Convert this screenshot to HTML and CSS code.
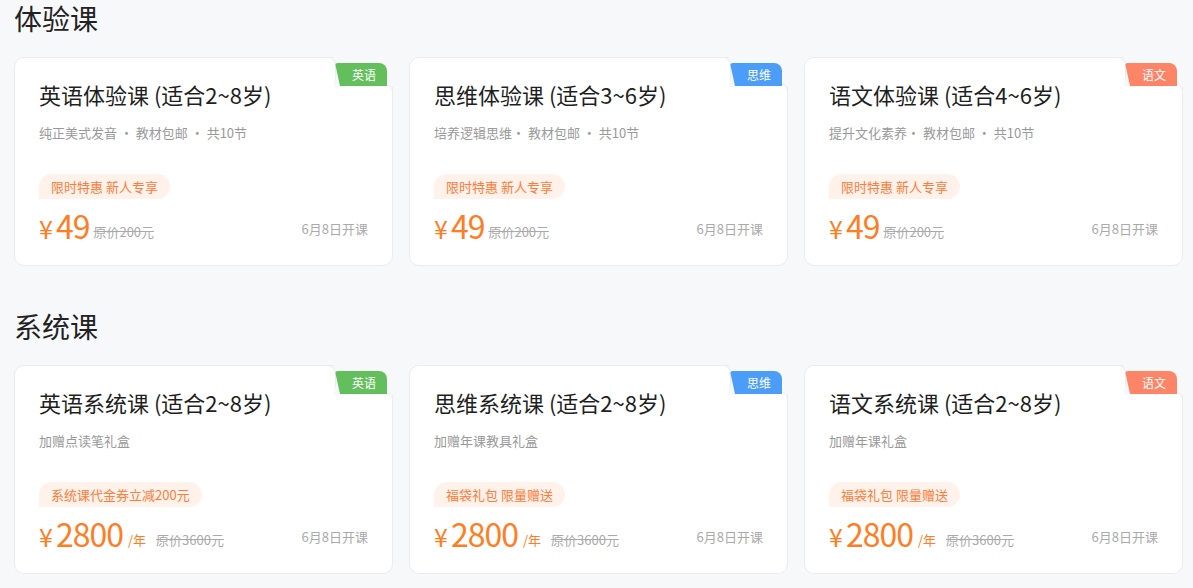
FILE: index.html
```html
<!DOCTYPE html>
<html lang="zh">
<head>
<meta charset="utf-8">
<link rel="stylesheet" href="styles.css">
</head>
<body>
<main class="page">
  <section class="section">
    <h2 class="section-title">体验课</h2>
    <div class="grid">
      <div class="card">
        <div class="notch"><span class="cap-left"></span><span class="cap-bottom"></span><span class="tag tag-green">英语</span></div>
        <h3 class="card-title">英语体验课 (适合2~8岁)</h3>
        <p class="card-sub">纯正美式发音 · 教材包邮 · 共10节</p>
        <div class="promo"><span class="pill">限时特惠 新人专享</span></div>
        <div class="price-row">
          <div class="price"><span class="yen">¥</span><span class="amount">49</span><span class="orig">原价200元</span></div>
          <span class="date">6月8日开课</span>
        </div>
      </div>
      <div class="card">
        <div class="notch"><span class="cap-left"></span><span class="cap-bottom"></span><span class="tag tag-blue">思维</span></div>
        <h3 class="card-title">思维体验课 (适合3~6岁)</h3>
        <p class="card-sub">培养逻辑思维· 教材包邮 · 共10节</p>
        <div class="promo"><span class="pill">限时特惠 新人专享</span></div>
        <div class="price-row">
          <div class="price"><span class="yen">¥</span><span class="amount">49</span><span class="orig">原价200元</span></div>
          <span class="date">6月8日开课</span>
        </div>
      </div>
      <div class="card">
        <div class="notch"><span class="cap-left"></span><span class="cap-bottom"></span><span class="tag tag-orange">语文</span></div>
        <h3 class="card-title">语文体验课 (适合4~6岁)</h3>
        <p class="card-sub">提升文化素养· 教材包邮 · 共10节</p>
        <div class="promo"><span class="pill">限时特惠 新人专享</span></div>
        <div class="price-row">
          <div class="price"><span class="yen">¥</span><span class="amount">49</span><span class="orig">原价200元</span></div>
          <span class="date">6月8日开课</span>
        </div>
      </div>
    </div>
  </section>
  <section class="section">
    <h2 class="section-title">系统课</h2>
    <div class="grid">
      <div class="card">
        <div class="notch"><span class="cap-left"></span><span class="cap-bottom"></span><span class="tag tag-green">英语</span></div>
        <h3 class="card-title">英语系统课 (适合2~8岁)</h3>
        <p class="card-sub">加赠点读笔礼盒</p>
        <div class="promo"><span class="pill">系统课代金券立减200元</span></div>
        <div class="price-row">
          <div class="price"><span class="yen">¥</span><span class="amount">2800</span><span class="unit">/年</span><span class="orig orig-gap">原价3600元</span></div>
          <span class="date">6月8日开课</span>
        </div>
      </div>
      <div class="card">
        <div class="notch"><span class="cap-left"></span><span class="cap-bottom"></span><span class="tag tag-blue">思维</span></div>
        <h3 class="card-title">思维系统课 (适合2~8岁)</h3>
        <p class="card-sub">加赠年课教具礼盒</p>
        <div class="promo"><span class="pill">福袋礼包 限量赠送</span></div>
        <div class="price-row">
          <div class="price"><span class="yen">¥</span><span class="amount">2800</span><span class="unit">/年</span><span class="orig orig-gap">原价3600元</span></div>
          <span class="date">6月8日开课</span>
        </div>
      </div>
      <div class="card">
        <div class="notch"><span class="cap-left"></span><span class="cap-bottom"></span><span class="tag tag-orange">语文</span></div>
        <h3 class="card-title">语文系统课 (适合2~8岁)</h3>
        <p class="card-sub">加赠年课礼盒</p>
        <div class="promo"><span class="pill">福袋礼包 限量赠送</span></div>
        <div class="price-row">
          <div class="price"><span class="yen">¥</span><span class="amount">2800</span><span class="unit">/年</span><span class="orig orig-gap">原价3600元</span></div>
          <span class="date">6月8日开课</span>
        </div>
      </div>
    </div>
  </section>
</main>
</body>
</html>
```

FILE: styles.css
```css
* { box-sizing: border-box; }
html, body { margin: 0; padding: 0; }
body {
  background: #f7f8fa;
  font-family: "Noto Sans CJK SC", "Noto Sans", sans-serif;
  color: #222;
}
.page {
  padding: 0 10px 0 14px;
}
.section-title {
  margin: 0;
  font-size: 28px;
  font-weight: 400;
  line-height: 36px;
  color: #222;
}
.section + .section .section-title { margin-top: 42px; }
.grid {
  margin-top: 21px;
  display: grid;
  grid-template-columns: repeat(3, 1fr);
  gap: 16px;
}
.card {
  position: relative;
  background: #fff;
  border: 1px solid #ececee;
  border-radius: 10px;
  height: 209px;
  padding: 20px 24px 0 24px;
}
.notch {
  position: absolute;
  top: -1px;
  right: -1px;
  width: 59px;
  height: 30px;
  background: #f7f8fa;
}
.cap-left {
  position: absolute;
  left: -8px;
  top: 0;
  width: 10px;
  height: 22px;
  background: #fff;
  border-top: 1px solid #ececee;
  border-right: 1px solid #ececee;
  border-top-right-radius: 8px;
}
.cap-bottom {
  position: absolute;
  right: 0;
  top: 26px;
  width: 14px;
  height: 14px;
  background: #fff;
  border-top: 1px solid #ececee;
  border-right: 1px solid #ececee;
  border-top-right-radius: 9px;
}
.tag {
  position: absolute;
  top: 6px;
  right: 6px;
  width: 52px;
  height: 23px;
  line-height: 23px;
  padding-left: 6px;
  text-align: center;
  font-size: 12px;
  color: #fff;
  border-radius: 3px 8px 0 0;
  clip-path: polygon(0 0, 100% 0, 100% 100%, 5px 100%);
}
.tag-green { background: #63bf5b; }
.tag-blue { background: #4b9df8; }
.tag-orange { background: #fd8567; }
.card-title {
  margin: 0;
  font-size: 22px;
  font-weight: 400;
  line-height: 32px;
  color: #1f1f1f;
}
.card-sub {
  margin: 13px 0 0;
  font-size: 13px;
  line-height: 20px;
  color: #999;
}
.promo {
  margin-top: 31px;
  display: flex;
}
.pill {
  display: inline-block;
  height: 25px;
  line-height: 25px;
  padding: 0 12px;
  background: #fff2ea;
  color: #ff7c3a;
  font-size: 13px;
  border-radius: 13px 13px 13px 0;
}
.price-row {
  margin-top: 9px;
  display: flex;
  justify-content: space-between;
  align-items: center;
  height: 40px;
}
.price {
  color: #ff7d23;
  line-height: 40px;
  white-space: nowrap;
}
.yen { font-size: 25px; margin-right: 3px; vertical-align: -2px; }
.amount { font-size: 32px; letter-spacing: -1px; vertical-align: -2px; }
.unit { font-size: 13px; margin-left: 5px; }
.orig {
  font-size: 13px;
  color: #aaa;
  text-decoration: line-through;
  margin-left: 4px;
}
.orig-gap { margin-left: 10px; }
.date {
  font-size: 13px;
  color: #aaa;
}
```
